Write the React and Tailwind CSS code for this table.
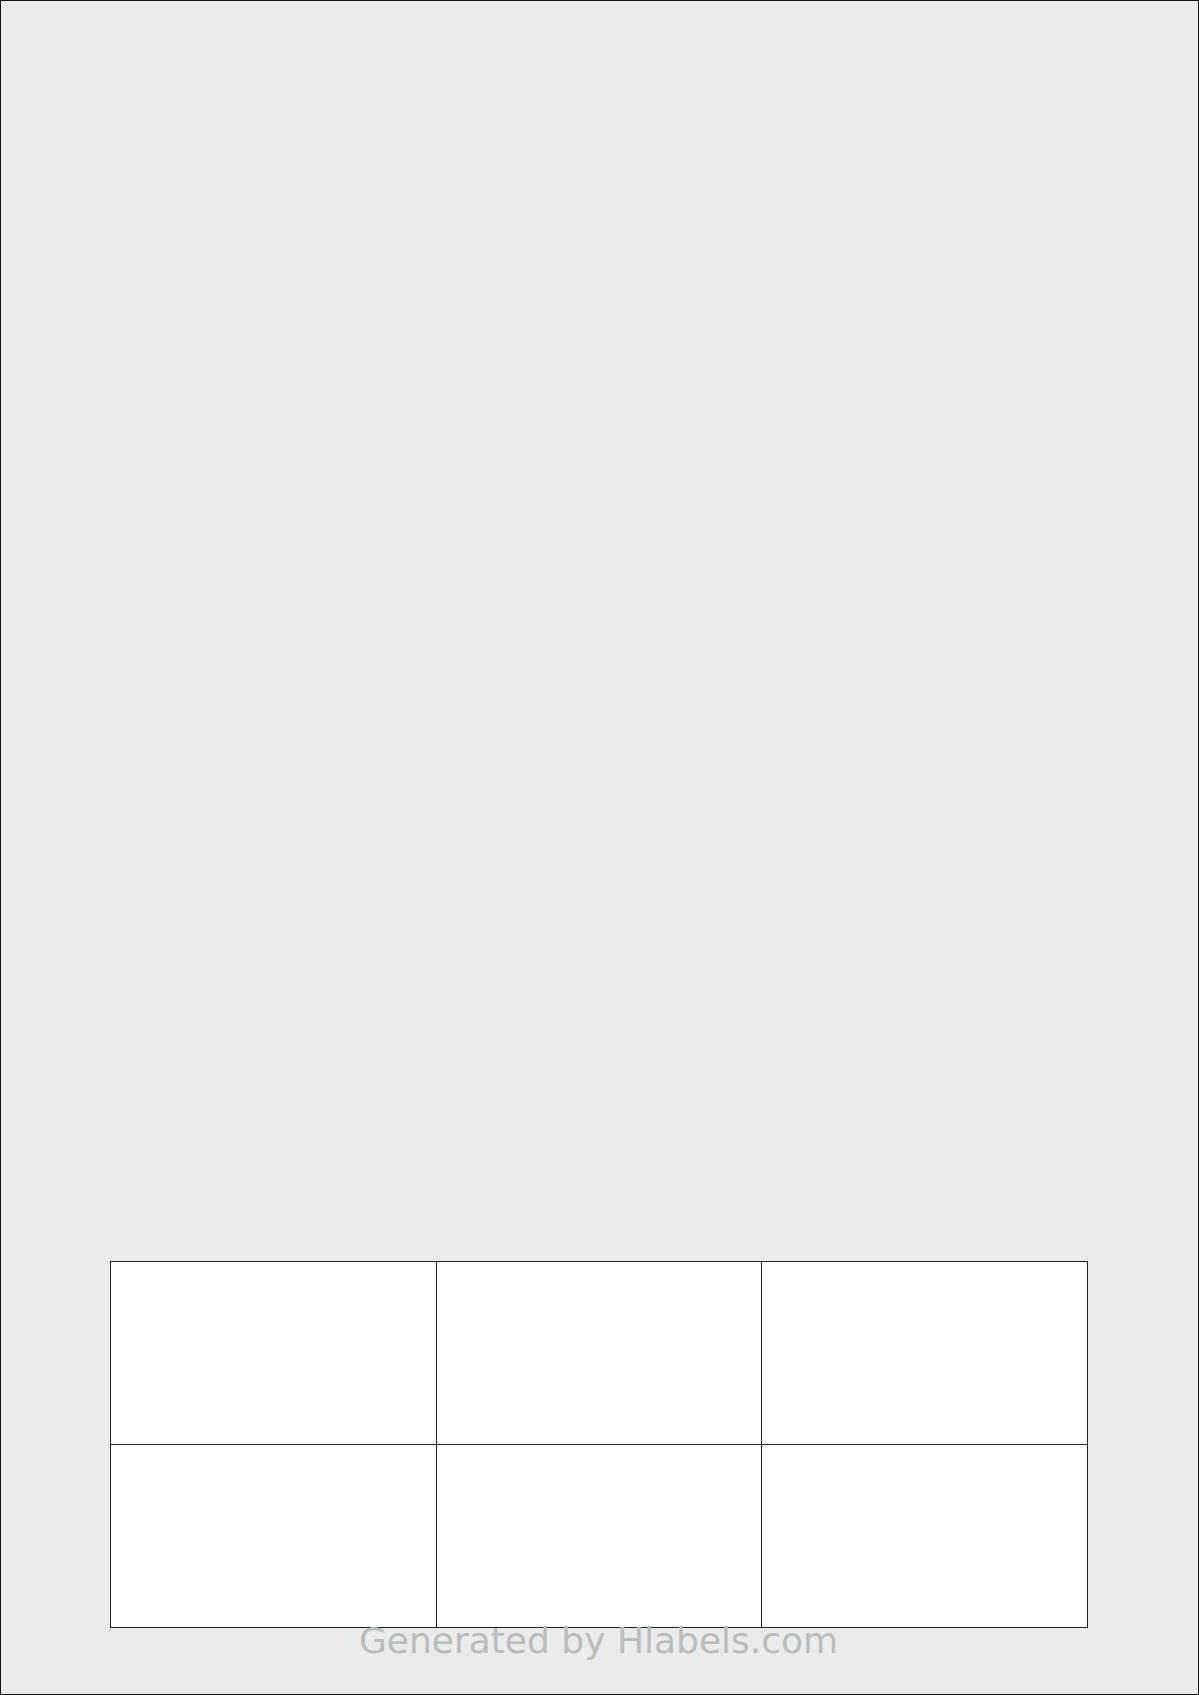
export default function App() {
  const cells = [0, 1, 2, 3, 4, 5];
  return (
    <div className="relative w-[1199px] h-[1695px] border border-[#111] bg-[#eaeceb] overflow-hidden" style={{ fontFamily: '"DejaVu Sans", sans-serif' }}>
      <div className="ml-[109px] mt-[1260px] grid grid-cols-[325px_324px_325px] grid-rows-[182px_182px] gap-px p-px bg-[#222] w-fit">
        {cells.map((c) => (
          <div key={c} className="bg-white" />
        ))}
      </div>
      <div className="absolute left-0 right-[2px] top-[1622px] text-center text-[36px] leading-none text-[#bbbcbc] whitespace-nowrap" style={{ fontFamily: '"DejaVu Sans", sans-serif' }}>
        Generated by Hlabels.com
      </div>
    </div>
  );
}
